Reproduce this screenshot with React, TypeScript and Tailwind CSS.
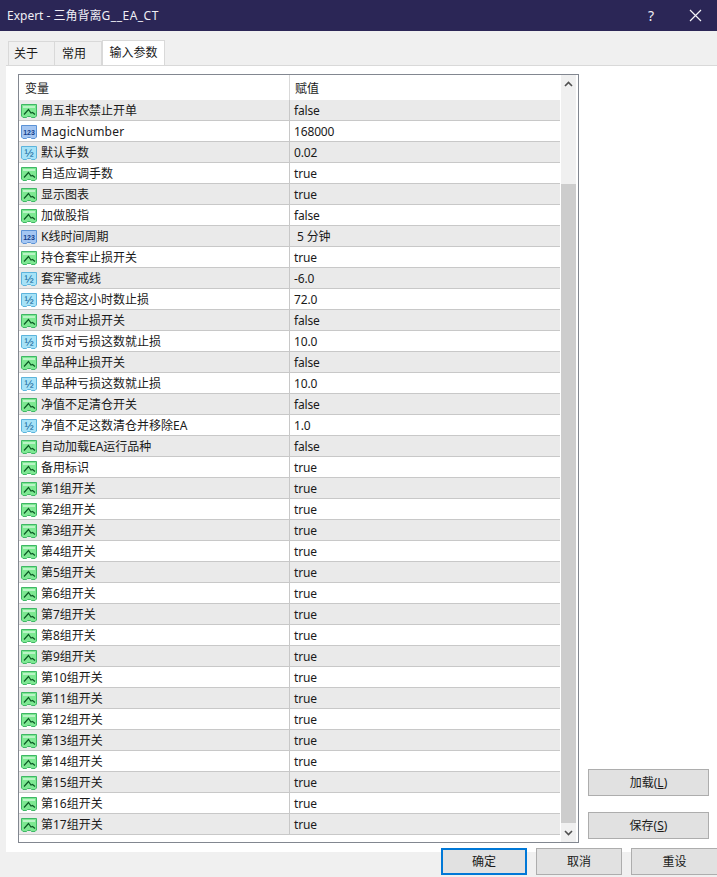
import React from 'react';

type Kind = 'bool' | 'int' | 'dbl';

const baseRows: [string, string, Kind][] = [
  ['周五非农禁止开单', 'false', 'bool'],
  ['MagicNumber', '168000', 'int'],
  ['默认手数', '0.02', 'dbl'],
  ['自适应调手数', 'true', 'bool'],
  ['显示图表', 'true', 'bool'],
  ['加做股指', 'false', 'bool'],
  ['K线时间周期', '\u00a05 分钟', 'int'],
  ['持仓套牢止损开关', 'true', 'bool'],
  ['套牢警戒线', '-6.0', 'dbl'],
  ['持仓超这小时数止损', '72.0', 'dbl'],
  ['货币对止损开关', 'false', 'bool'],
  ['货币对亏损这数就止损', '10.0', 'dbl'],
  ['单品种止损开关', 'false', 'bool'],
  ['单品种亏损这数就止损', '10.0', 'dbl'],
  ['净值不足清仓开关', 'false', 'bool'],
  ['净值不足这数清仓并移除EA', '1.0', 'dbl'],
  ['自动加载EA运行品种', 'false', 'bool'],
  ['备用标识', 'true', 'bool'],
];

const groupRows: [string, string, Kind][] = Array.from({ length: 17 }, (_, i) => [`第${i + 1}组开关`, 'true', 'bool']);
const rows = [...baseRows, ...groupRows];

const TAG = 'M0.500 1.500h15v11.500l-1.500 1.500h-3.500l-1-1h-3l-1 1h-3.500l-1.500-1.500z';

const ParamIcon: React.FC<{ kind: Kind }> = ({ kind }) => {
  if (kind === 'bool') {
    return (
      <svg width="16" height="16" viewBox="0 0 16 16" className="shrink-0">
        <path d={TAG} fill="#7de892" stroke="#3fb765" />
        <path d="M2 3h12v2H2z" fill="#b9f4c6" />
        <path d="M3 11.500L7.500 6.500l2.500 3.500 1.500-.5 2.500 2" fill="none" stroke="#0b5a24" strokeWidth="1.200" />
      </svg>
    );
  }
  const isInt = kind === 'int';
  return (
    <svg width="16" height="16" viewBox="0 0 16 16" className="shrink-0">
      <path d={TAG} fill={isInt ? '#a4c6f2' : '#a6e2f7'} stroke={isInt ? '#5c93d6' : '#5cb4dc'} />
      <text
        x="8"
        y={isInt ? 10.500 : 11.500}
        textAnchor="middle"
        fontSize={isInt ? 7 : 11}
        fontWeight={isInt ? 700 : 400}
        fontFamily="'Liberation Sans', sans-serif"
        fill={isInt ? '#123f8c' : '#0f5f96'}
      >
        {isInt ? '123' : '½'}
      </text>
    </svg>
  );
};

const Button: React.FC<{ children: React.ReactNode; className?: string }> = ({ children, className = '' }) => (
  <button className={`flex items-center justify-center bg-[#e1e1e1] text-[12px] text-[#1a1a1a] ${className}`}>
    {children}
  </button>
);

export default function App() {
  return (
    <div
      className="w-[717px] h-[877px] overflow-hidden flex flex-col bg-[#f0f0f0] text-[12px] text-[#1a1a1a]"
      style={{ fontFamily: "'Noto Sans', 'Noto Sans CJK SC', sans-serif" }}
    >
      {/* title bar */}
      <div className="h-[31px] shrink-0 flex items-center bg-[#2b2656] text-[#f0eff5] pl-[7px]">
        <span className="text-[12px] flex-1">
          Expert - 三角背离<span className="tracking-[0.5px]">G__EA_CT</span>
        </span>
        <span className="text-[14px] w-[14px] mr-[31px] text-center">?</span>
        <svg width="13" height="13" viewBox="0 0 13 13" className="mr-[15px]">
          <path d="M1 1l11 11M12 1L1 12" stroke="#f4f4f8" strokeWidth="1.200" />
        </svg>
      </div>

      {/* tabs */}
      <div className="h-[34px] shrink-0 flex items-end pl-[8px]">
        <div className="w-[47px] h-[24px] flex items-center pl-[5px] bg-[#f0f0f0] border border-b-0 border-[#d9d9d9]">关于</div>
        <div className="w-[47px] h-[24px] flex items-center pl-[7px] bg-[#f0f0f0] border border-l-0 border-b-0 border-[#d9d9d9]">常用</div>
        <div className="w-[63px] h-[25px] flex items-center justify-center bg-white border border-b-0 border-[#d9d9d9]">输入参数</div>
      </div>

      {/* panel */}
      <div className="w-[711px] h-[787px] ml-[6px] shrink-0 flex bg-white border-t border-[#d9d9d9] pt-[8px] pl-[12px]">
        <div className="w-[561px] h-[769px] shrink-0 flex border border-[#828790]">
          <div className="w-[541px] shrink-0 flex flex-col">
            <div className="h-[25px] shrink-0 flex items-center">
              <div className="w-[270px] pl-[6px] pt-[2px]">变量</div>
              <div className="pl-[5px] pt-[2px] border-l border-[#d9d9d9] h-full flex items-center">赋值</div>
            </div>
            {rows.map(([name, value, kind], i) => (
              <div
                key={i}
                className={`h-[21px] shrink-0 flex items-center border-b border-[#c8c8c8] ${i % 2 === 0 ? 'bg-[#eaeaea]' : 'bg-white'}`}
              >
                <div className="w-[270px] h-full flex items-center gap-[4px] pl-[2px] pt-[2px] whitespace-nowrap">
                  <ParamIcon kind={kind} />
                  <span className={name === 'MagicNumber' ? 'tracking-[0.25px]' : ''}>{name}</span>
                </div>
                <div className="pl-[4px] pt-[2px] h-full flex items-center border-l border-[#c8c8c8] tracking-[-0.15px]">{value}</div>
              </div>
            ))}
          </div>

          {/* scrollbar */}
          <div className="ml-px w-[15px] shrink-0 flex flex-col bg-[#f0f0f0]">
            <div className="h-[17px] flex items-center justify-center shrink-0">
              <svg width="9" height="6" viewBox="0 0 9 6">
                <path d="M1 5l3.500-3.500L8 5" fill="none" stroke="#505050" strokeWidth="1.600" />
              </svg>
            </div>
            <div className="h-[92px] shrink-0" />
            <div className="flex-1 bg-[#cdcdcd]" />
            <div className="h-[19px] flex items-center justify-center shrink-0">
              <svg width="9" height="6" viewBox="0 0 9 6">
                <path d="M1 1l3.500 3.500L8 1" fill="none" stroke="#505050" strokeWidth="1.600" />
              </svg>
            </div>
          </div>
        </div>

        {/* load / save */}
        <div className="ml-[9px] h-[769px] w-[121px] flex flex-col justify-end gap-[16px] pb-[4px]">
          <Button className="w-[121px] h-[27px] border border-[#adadad]">
            <span>加载(<span className="underline">L</span>)</span>
          </Button>
          <Button className="w-[121px] h-[27px] border border-[#adadad]">
            <span>保存(<span className="underline">S</span>)</span>
          </Button>
        </div>
      </div>

      {/* footer */}
      <div className="flex justify-end gap-[9px] mt-[-4px] mr-[-1px]">
        <Button className="w-[86px] h-[27px] border-2 border-[#0078d7]">确定</Button>
        <Button className="w-[86px] h-[27px] border border-[#adadad]">取消</Button>
        <Button className="w-[87px] h-[27px] border border-[#adadad]">重设</Button>
      </div>
    </div>
  );
}
